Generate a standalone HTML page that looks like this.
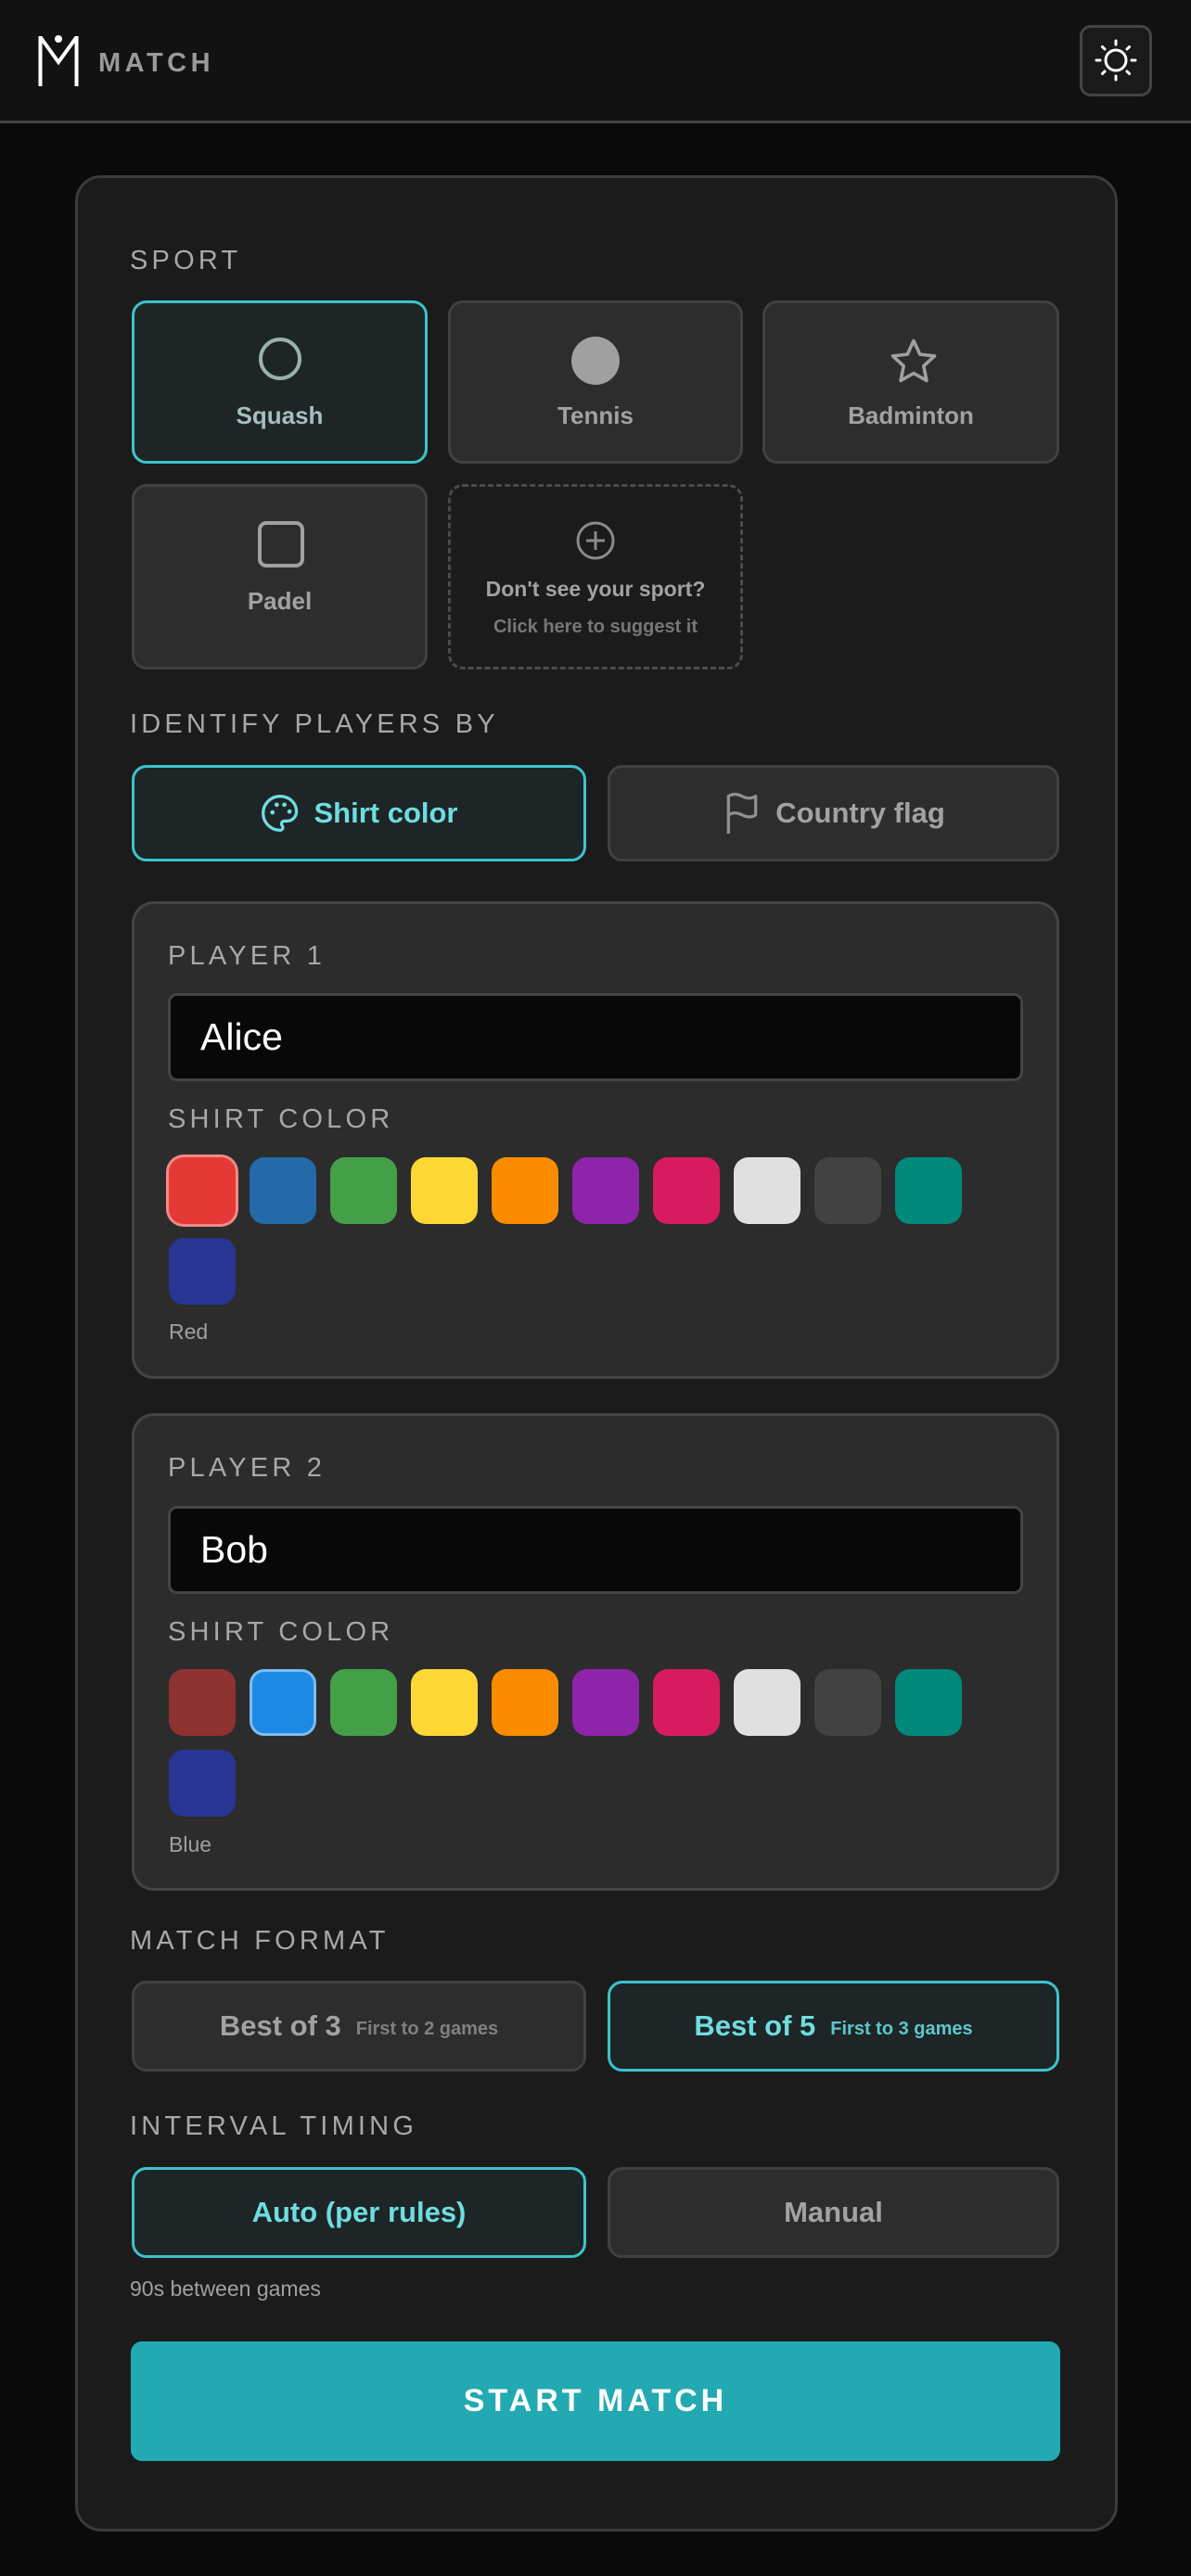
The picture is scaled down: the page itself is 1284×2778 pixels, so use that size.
<!DOCTYPE html>
<html><head><meta charset="utf-8"><style>
*{box-sizing:border-box;margin:0;padding:0}
body{width:1284px;height:2778px;background:#0a0a0a;font-family:"Liberation Sans",Arial,sans-serif;position:relative;overflow:hidden;color:#999}
.a{position:absolute}
.hdr{left:0;top:0;width:1284px;height:133px;background:#121212;border-bottom:3px solid #444}
.lbl{font-size:29px;letter-spacing:4.2px;color:#a8a8a8;line-height:1;white-space:nowrap}
.tile{background:#2d2d2d;border:3px solid #414141;border-radius:16px}
.sel{background:#1d2527;border:3px solid #3cc3cc}
.tl{width:100%;text-align:center;font-weight:bold;font-size:26px;color:#a2a2a2;position:absolute;left:0}
.pc{background:#2c2c2c;border:3px solid #444;border-radius:24px;left:142px;width:1000px}
.inp{background:#080808;border:3px solid #444;border-radius:10px;left:36px;width:922px;height:95px;color:#fff;font-size:41px;padding-left:32px;line-height:89px}
.sw{width:72px;height:72px;border-radius:16px;position:absolute}
.btn{display:flex;align-items:center;justify-content:center;font-weight:bold;color:#a2a2a2}
</style></head><body>
<div class="a hdr">
<svg class="a" style="left:40px;top:37px" width="46" height="58" viewBox="0 0 46 58"><path d="M3.5 2V56M42.5 2V56M3.5 3L23 30L42.5 3" stroke="#fff" stroke-width="4" fill="none"/><circle cx="23" cy="5" r="4" fill="#fff"/></svg>
<div class="a" style="left:106px;top:52px;font-size:29px;font-weight:bold;letter-spacing:4.5px;color:#9a9a9a">MATCH</div>
<div class="a" style="left:1164px;top:27px;width:78px;height:77px;border:3px solid #444;border-radius:12px;background:#1a1a1a"></div>
<svg class="a" style="left:1178px;top:40px" width="50" height="50" viewBox="-25 -25 50 50"><circle r="11" stroke="#fff" stroke-width="3" fill="none"/><g stroke="#fff" stroke-width="3" stroke-linecap="round"><path d="M0-17V-21M0 17V21M-17 0H-21M17 0H21M12-12L14.5-14.5M-12-12L-14.5-14.5M12 12L14.5 14.5M-12 12L-14.5 14.5"/></g></svg>
</div>
<div class="a" style="left:81px;top:189px;width:1124px;height:2541px;background:#1b1b1b;border:3px solid #3b3b3b;border-radius:28px"></div>

<div class="a lbl" style="left:140px;top:267px">SPORT</div>
<div class="a tile sel" style="left:142px;top:324px;width:319px;height:176px"><svg class="a" style="left:133px;top:36px" width="48" height="48"><circle cx="24" cy="24" r="21" stroke="#9bb0b0" stroke-width="4" fill="none"/></svg><div class="tl" style="top:106px;color:#a6bebe">Squash</div></div>
<div class="a tile" style="left:483px;top:324px;width:318px;height:176px"><svg class="a" style="left:130px;top:36px" width="52" height="52"><circle cx="26" cy="26" r="26" fill="#a0a0a0"/></svg><div class="tl" style="top:106px">Tennis</div></div>
<div class="a tile" style="left:822px;top:324px;width:320px;height:176px"><svg class="a" style="left:132px;top:36px" width="56" height="54" viewBox="0 0 24 24"><path d="M12 2l3 6.5 7 .8-5.2 4.8 1.4 7L12 17.6 5.8 21.1l1.4-7L2 9.3l7-.8z" stroke="#a0a0a0" stroke-width="1.6" fill="none" stroke-linejoin="round"/></svg><div class="tl" style="top:106px">Badminton</div></div>
<div class="a tile" style="left:142px;top:522px;width:319px;height:200px"><svg class="a" style="left:132px;top:36px" width="52" height="52"><rect x="3" y="3" width="46" height="46" rx="7" stroke="#a0a0a0" stroke-width="4" fill="none"/></svg><div class="tl" style="top:108px">Padel</div></div>
<div class="a" style="left:483px;top:522px;width:318px;height:200px;border:3px dashed #4a4a4a;border-radius:16px"><svg class="a" style="left:134px;top:36px" width="44" height="44"><circle cx="22" cy="22" r="19" stroke="#8a8a8a" stroke-width="3" fill="none"/><path d="M22 12V32M12 22H32" stroke="#8a8a8a" stroke-width="3"/></svg><div class="tl" style="top:97px;font-size:23px">Don't see your sport?</div><div class="tl" style="top:140px;font-size:20px;color:#777">Click here to suggest it</div></div>

<div class="a lbl" style="left:140px;top:767px">IDENTIFY PLAYERS BY</div>
<div class="a tile sel btn" style="left:142px;top:825px;width:490px;height:104px;color:#6fdde0;font-size:31px"><svg width="44" height="44" viewBox="0 0 24 24" style="margin-right:14px"><path d="M12 2C6.5 2 2 6.5 2 12s4.5 10 10 10c.9 0 1.6-.7 1.6-1.6 0-.4-.2-.8-.4-1.1-.3-.3-.4-.7-.4-1.1 0-.9.7-1.6 1.6-1.6H16c3.1 0 5.6-2.5 5.6-5.6C21.6 6 17.3 2 12 2z" stroke="#6fdde0" stroke-width="1.8" fill="none"/><circle cx="7.5" cy="11.5" r="1.3" fill="#6fdde0"/><circle cx="10" cy="7" r="1.3" fill="#6fdde0"/><circle cx="14.5" cy="7" r="1.3" fill="#6fdde0"/><circle cx="17.5" cy="11" r="1.3" fill="#6fdde0"/></svg>Shirt color</div>
<div class="a tile btn" style="left:655px;top:825px;width:487px;height:104px;font-size:31px"><svg width="44" height="50" viewBox="0 0 24 26" style="margin-right:14px"><path d="M4 25V3c3-2 6-1 8 0s5 2 8 0v11c-3 2-6 1-8 0s-5-2-8 0" stroke="#909090" stroke-width="1.8" fill="none" stroke-linejoin="round"/></svg>Country flag</div>

<div class="a pc" style="top:972px;height:515px">
<div class="a lbl" style="left:36px;top:42px">PLAYER 1</div>
<div class="a inp" style="top:96px">Alice</div>
<div class="a lbl" style="left:36px;top:218px">SHIRT COLOR</div>
<div class="sw" style="left:37px;top:273px;background:#e53935;box-shadow:0 0 0 3px #f08a88"></div>
<div class="sw" style="left:124px;top:273px;background:#2469a8"></div>
<div class="sw" style="left:211px;top:273px;background:#43a047"></div>
<div class="sw" style="left:298px;top:273px;background:#fdd835"></div>
<div class="sw" style="left:385px;top:273px;background:#fb8c00"></div>
<div class="sw" style="left:472px;top:273px;background:#8e24aa"></div>
<div class="sw" style="left:559px;top:273px;background:#d81b60"></div>
<div class="sw" style="left:646px;top:273px;background:#e0e0e0"></div>
<div class="sw" style="left:733px;top:273px;background:#424242"></div>
<div class="sw" style="left:820px;top:273px;background:#00897b"></div>
<div class="sw" style="left:37px;top:360px;background:#283593"></div>
<div class="a" style="left:37px;top:448px;font-size:23px;color:#a0a0a0">Red</div>
</div>

<div class="a pc" style="top:1524px;height:515px">
<div class="a lbl" style="left:36px;top:42px">PLAYER 2</div>
<div class="a inp" style="top:97px">Bob</div>
<div class="a lbl" style="left:36px;top:219px">SHIRT COLOR</div>
<div class="sw" style="left:37px;top:273px;background:#8e3232"></div>
<div class="sw" style="left:124px;top:273px;background:#1e88e5;border:3px solid #7bbdf2"></div>
<div class="sw" style="left:211px;top:273px;background:#43a047"></div>
<div class="sw" style="left:298px;top:273px;background:#fdd835"></div>
<div class="sw" style="left:385px;top:273px;background:#fb8c00"></div>
<div class="sw" style="left:472px;top:273px;background:#8e24aa"></div>
<div class="sw" style="left:559px;top:273px;background:#d81b60"></div>
<div class="sw" style="left:646px;top:273px;background:#e0e0e0"></div>
<div class="sw" style="left:733px;top:273px;background:#424242"></div>
<div class="sw" style="left:820px;top:273px;background:#00897b"></div>
<div class="sw" style="left:37px;top:360px;background:#283593"></div>
<div class="a" style="left:37px;top:449px;font-size:23px;color:#a0a0a0">Blue</div>
</div>

<div class="a lbl" style="left:140px;top:2079px">MATCH FORMAT</div>
<div class="a tile btn" style="left:142px;top:2136px;width:490px;height:98px;font-size:31px">Best of 3<span style="font-size:20px;color:#808080;margin-left:16px;margin-top:6px">First to 2 games</span></div>
<div class="a tile sel btn" style="left:655px;top:2136px;width:487px;height:98px;font-size:31px;color:#6fdde0">Best of 5<span style="font-size:20px;color:#5fc6c9;margin-left:16px;margin-top:6px">First to 3 games</span></div>

<div class="a lbl" style="left:140px;top:2279px">INTERVAL TIMING</div>
<div class="a tile sel btn" style="left:142px;top:2337px;width:490px;height:98px;font-size:31px;color:#6fdde0">Auto (per rules)</div>
<div class="a tile btn" style="left:655px;top:2337px;width:487px;height:98px;font-size:31px">Manual</div>
<div class="a" style="left:140px;top:2455px;font-size:23px;color:#a0a0a0">90s between games</div>

<div class="a btn" style="left:141px;top:2525px;width:1002px;height:129px;background:#23a9b1;border-radius:12px;color:#fff;font-size:34px;letter-spacing:4px">START MATCH</div>
</body></html>
